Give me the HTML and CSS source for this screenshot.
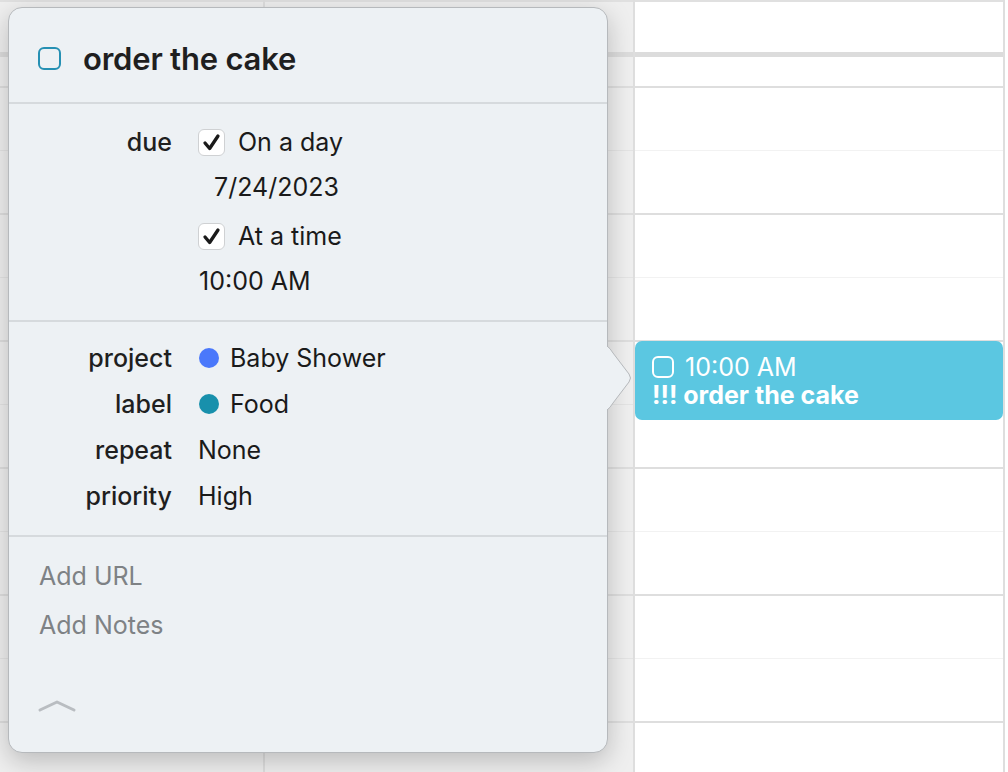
FILE: index.html
```html
<!DOCTYPE html>
<html>
<head>
<meta charset="utf-8">
<link rel="stylesheet" href="styles.css">
</head>
<body>
<div class="cal">
  <div class="col c1 shade">
    <div class="allday"></div><div class="band"></div><div class="pre"></div>
    <div class="hour"><div class="half"></div></div>
    <div class="hour"><div class="half"></div></div>
    <div class="hour"><div class="half"></div></div>
    <div class="hour"><div class="half"></div></div>
    <div class="hour"><div class="half"></div></div>
    <div class="hour"><div class="half"></div></div>
  </div>
  <div class="col c2 shade">
    <div class="allday"></div><div class="band"></div><div class="pre"></div>
    <div class="hour"><div class="half"></div></div>
    <div class="hour"><div class="half"></div></div>
    <div class="hour"><div class="half"></div></div>
    <div class="hour"><div class="half"></div></div>
    <div class="hour"><div class="half"></div></div>
    <div class="hour"><div class="half"></div></div>
  </div>
  <div class="col c3">
    <div class="allday"></div><div class="band"></div><div class="pre"></div>
    <div class="hour"><div class="half"></div></div>
    <div class="hour"><div class="half"></div></div>
    <div class="hour"><div class="half"></div></div>
    <div class="hour"><div class="half"></div></div>
    <div class="hour"><div class="half"></div></div>
    <div class="hour"><div class="half"></div></div>
    <div class="event">
      <div class="ev-line"><span class="ev-box"></span><span>10:00 AM</span></div>
      <div class="ev-title">!!! order the cake</div>
    </div>
  </div>
  <div class="col c4"></div>
</div>

<div class="popover">
  <svg class="arrow" width="30" height="80" viewBox="0 0 30 80">
    <path d="M0 6 Q3 8 6 13 L22 34 Q25 38 22 42 L6 63 Q3 68 0 70 Z" fill="#edf1f4"/>
    <path d="M0 6 Q3 8 6 13 L22 34 Q25 38 22 42 L6 63 Q3 68 0 70" fill="none" stroke="#b6b9bc" stroke-width="1"/>
  </svg>
  <div class="head">
    <span class="head-box"></span>
    <span class="title">order the cake</span>
  </div>
  <div class="due">
    <div class="label due-label">due</div>
    <div class="due-values">
      <div class="chk-row">
        <span class="chk"><svg width="27" height="27" viewBox="0 0 27 27"><path d="M6.5 14 L11.5 20 L20.5 6.5" fill="none" stroke="#1a1a1a" stroke-width="3.6" stroke-linecap="round" stroke-linejoin="round"/></svg></span>
        <span class="val">On a day</span>
      </div>
      <div class="val date">7/24/2023</div>
      <div class="chk-row second">
        <span class="chk"><svg width="27" height="27" viewBox="0 0 27 27"><path d="M6.5 14 L11.5 20 L20.5 6.5" fill="none" stroke="#1a1a1a" stroke-width="3.6" stroke-linecap="round" stroke-linejoin="round"/></svg></span>
        <span class="val">At a time</span>
      </div>
      <div class="val time">10:00 AM</div>
    </div>
  </div>
  <div class="props">
    <div class="label">project</div>
    <div class="val"><span class="dot blue"></span>Baby Shower</div>
    <div class="label">label</div>
    <div class="val"><span class="dot teal"></span>Food</div>
    <div class="label">repeat</div>
    <div class="val">None</div>
    <div class="label">priority</div>
    <div class="val">High</div>
  </div>
  <div class="extra">
    <div class="add">Add URL</div>
    <div class="add notes">Add Notes</div>
    <svg class="chev" width="38" height="14" viewBox="0 0 38 14"><path d="M2 11 L19 3 L36 11" fill="none" stroke="#b9bdc1" stroke-width="3" stroke-linecap="round" stroke-linejoin="round"/></svg>
  </div>
</div>
</body>
</html>
```

FILE: styles.css
```css
html, body {
  margin: 0;
  padding: 0;
  width: 1008px;
  height: 772px;
  overflow: hidden;
  background: #ffffff;
  font-family: Inter, "Noto Sans", sans-serif;
}

.cal {
  display: flex;
  height: 772px;
  overflow: hidden;
}

.col {
  box-sizing: border-box;
  height: 900px;
  border-right: 2px solid #dedede;
  flex: none;
}
.c1 { width: 265px; }
.c2 { width: 370px; }
.c3 { width: 370px; position: relative; background: #fff; }
.c4 { flex: 1; border-right: none; }

.shade { background: #efefef; }

.allday {
  height: 50px;
  border-top: 2px solid #e0e0e0;
}
.band {
  height: 5px;
  background: #dcdcdc;
}
.pre { height: 29px; }
.hour {
  box-sizing: border-box;
  height: 127px;
  border-top: 2px solid #dedede;
}
.half {
  margin-top: 62px;
  border-top: 1px solid #f2f2f2;
}
.shade .half { border-top-color: #e4e4e4; }

.event {
  position: absolute;
  left: 0;
  top: 341px;
  width: 368px;
  height: 79px;
  box-sizing: border-box;
  background: #5bc7e1;
  border-radius: 7px;
  padding: 13px 0 0 17px;
  color: #fff;
  font-size: 25px;
}
.ev-line {
  display: flex;
  align-items: center;
  gap: 11px;
  height: 26px;
  line-height: 26px;
}
.ev-box {
  width: 18px;
  height: 18px;
  border: 2px solid #fff;
  border-radius: 6px;
}
.ev-title {
  font-weight: 700;
  line-height: 31px;
}

.popover {
  position: absolute;
  left: 8px;
  top: 7px;
  width: 600px;
  height: 746px;
  box-sizing: border-box;
  background: #edf1f4;
  border: 1px solid #b6b9bc;
  border-radius: 14px;
  box-shadow: 0 8px 26px rgba(0, 0, 0, 0.22);
  color: #1d1d1f;
  font-size: 25px;
}

.arrow {
  position: absolute;
  left: 598px;
  top: 332px;
  overflow: visible;
}

.head {
  box-sizing: border-box;
  padding: 6px 0 0 29px;
  display: flex;
  align-items: center;
  border-bottom: 2px solid #d6dadd;
  height: 96px;
}
.head-box {
  width: 19px;
  height: 19px;
  border: 2px solid #2590b3;
  border-radius: 6px;
  flex: none;
}
.title {
  margin-left: 22px;
  font-size: 31px;
  font-weight: 600;
  color: #1f1f1f;
  letter-spacing: -0.2px;
}

.label {
  text-align: right;
  font-weight: 500;
  color: #1f1f1f;
}
.val {
  font-weight: 400;
  color: #1a1a1a;
}

.due {
  display: grid;
  grid-template-columns: 163px 1fr;
  column-gap: 26px;
  padding: 24px 0 25px 0;
  border-bottom: 2px solid #d6dadd;
}
.due-label {
  line-height: 28px;
  height: 28px;
}
.due-values {
  display: flex;
  flex-direction: column;
}
.chk-row {
  display: flex;
  align-items: center;
  gap: 13px;
  height: 28px;
}
.chk-row.second { margin-top: 21px; }
.chk {
  width: 27px;
  height: 27px;
  box-sizing: border-box;
  background: #fff;
  border: 1px solid #cfd1d3;
  border-radius: 6px;
  display: flex;
  align-items: center;
  justify-content: center;
  flex: none;
}
.chk svg { width: 25px; height: 25px; }
.chk-row .val, .date, .time {
  line-height: 28px;
  height: 28px;
}
.date { margin-top: 17px; padding-left: 16px; }
.time { margin-top: 17px; padding-left: 1px; }

.props {
  display: grid;
  grid-template-columns: 163px 1fr;
  column-gap: 26px;
  grid-auto-rows: 46px;
  align-items: center;
  padding: 13px 0 16px 0;
  border-bottom: 2px solid #d6dadd;
}
.props .val {
  display: flex;
  align-items: center;
}
.dot {
  width: 20px;
  height: 20px;
  border-radius: 50%;
  margin: 0 11px 0 1px;
  flex: none;
}
.dot.blue { background: #4a78fb; }
.dot.teal { background: #1890ac; }

.extra {
  padding: 25px 0 0 30px;
}
.add {
  color: #7e8285;
  line-height: 28px;
  height: 28px;
}
.add.notes { margin-top: 21px; }
.chev {
  display: block;
  margin-top: 60px;
  margin-left: -1px;
}
```
